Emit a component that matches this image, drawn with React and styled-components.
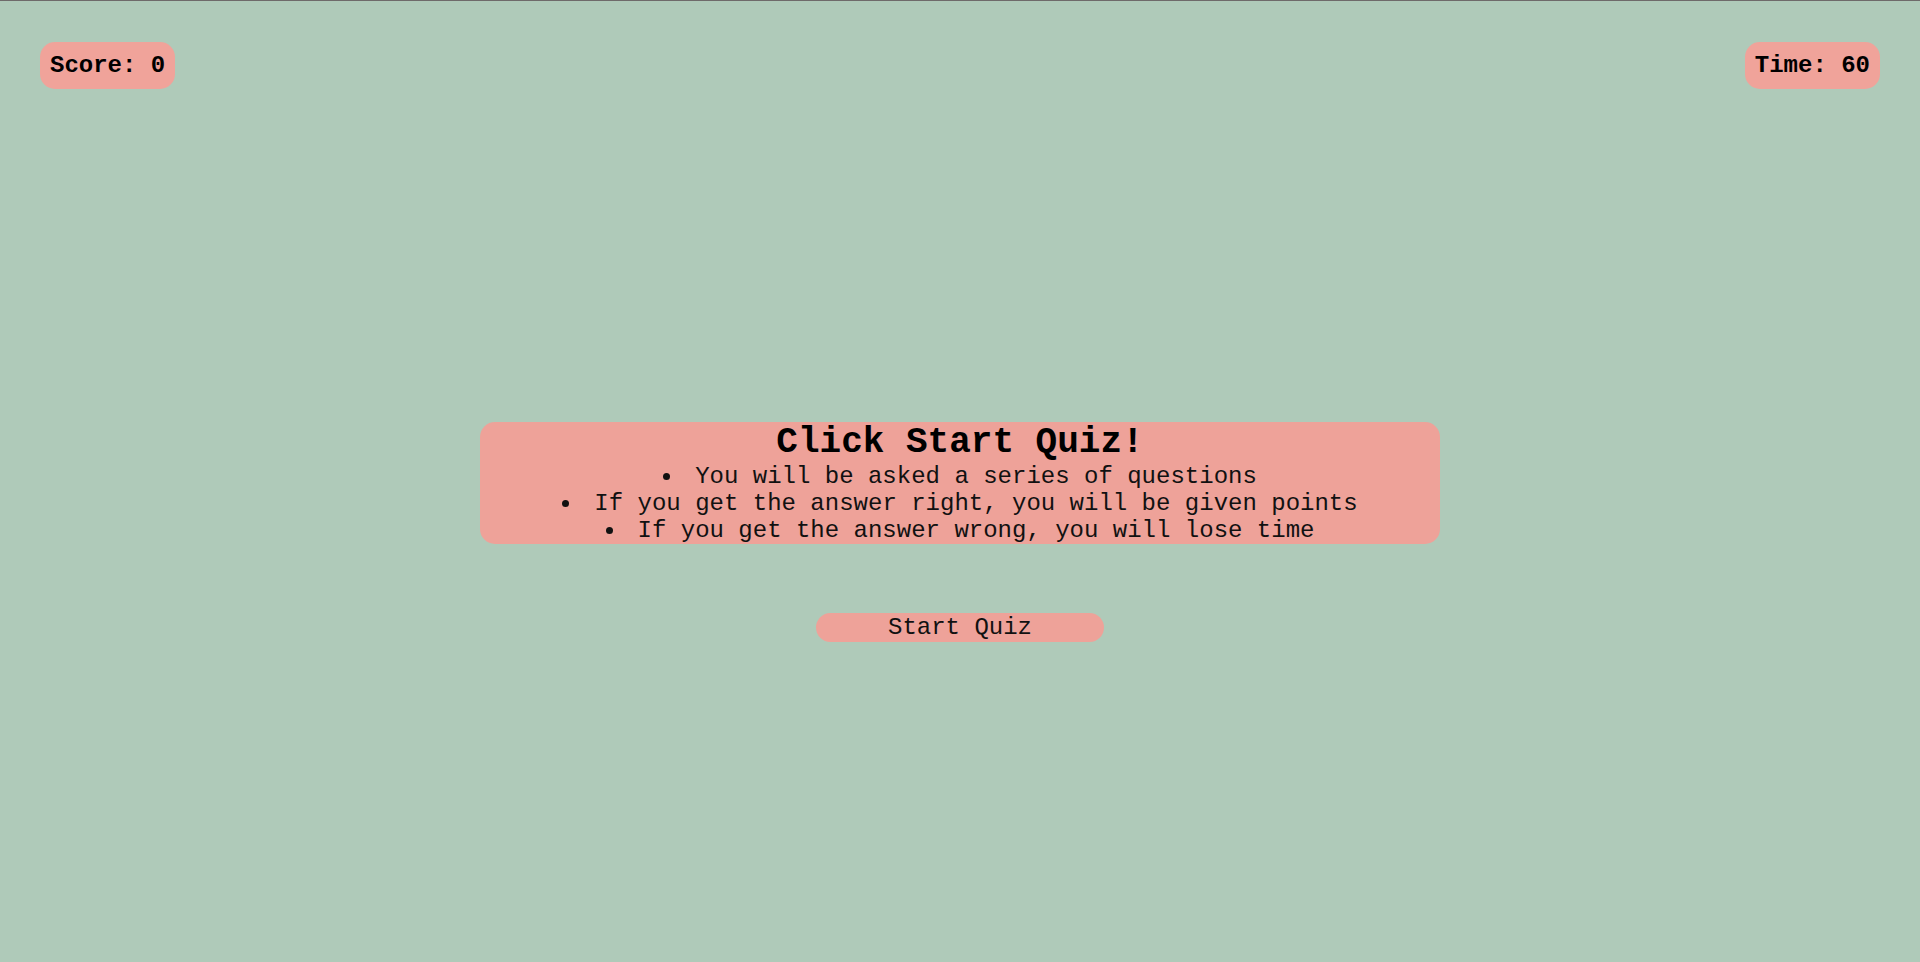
import React, { useState } from "react";
import styled, { createGlobalStyle } from "styled-components";

const GlobalStyle = createGlobalStyle`
    html, body {
        margin: 0;
        padding: 0;
    }
    body {
        background-color: #afcab9;
        font-family: "Liberation Mono", "Courier New", monospace;
        min-height: 962px;
        border-top: 1px solid #6e6a6a;
        box-sizing: border-box;
    }
`

const Page = styled.div`
    display: flex;
    flex-direction: column;
    width: 100%;
`

const Header = styled.header`
    display: flex;
    justify-content: space-between;
    padding: 41px 40px 0 40px;
`

const Badge = styled.div`
    background-color: #f0a39a;
    border-radius: 15px;
    padding: 10px;
    font-size: 24px;
    font-weight: bold;
    color: #000;
`

const Intro = styled.section`
    width: 50%;
    margin: 333px auto 0 auto;
    background-color: #eea299;
    border-radius: 15px;
    text-align: center;
    color: #111;

    h1 {
        margin: 0;
        font-size: 36px;
        font-weight: bold;
        color: #000;
    }

    ul {
        margin: 0;
        padding: 0;
        list-style: disc inside;
        font-size: 24px;
    }
`

const StartButton = styled.button`
    display: block;
    width: 15%;
    margin: 69px auto 0 auto;
    padding: 1px 0;
    border: none;
    border-radius: 15px;
    background-color: #eea299;
    font-family: "Liberation Mono", "Courier New", monospace;
    font-size: 24px;
    color: #111;
    cursor: pointer;
`

const rules = [
    "You will be asked a series of questions",
    "If you get the answer right, you will be given points",
    "If you get the answer wrong, you will lose time",
]

const App = () => {
    const [score] = useState(0)
    const [time] = useState(60)

    return (
        <Page>
            <GlobalStyle />
            <Header>
                <Badge>Score: {score}</Badge>
                <Badge>Time: {time}</Badge>
            </Header>
            <Intro>
                <h1>Click Start Quiz!</h1>
                <ul>
                    {rules.map(r => <li key={r}>{r}</li>)}
                </ul>
            </Intro>
            <StartButton>Start Quiz</StartButton>
        </Page>
    )
}

export default App;
